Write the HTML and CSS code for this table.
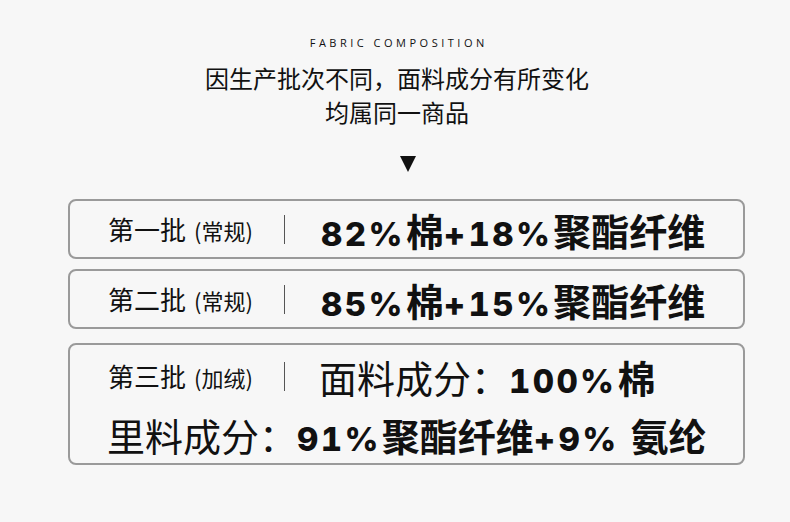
FILE: index.html
```html
<!DOCTYPE html>
<html lang="zh-CN">
<head>
<meta charset="utf-8">
<title>Fabric Composition</title>
<link rel="stylesheet" href="styles.css">
</head>
<body>
<main class="page">
  <header class="head">
    <p class="eyebrow">FABRIC COMPOSITION</p>
    <p class="note">因生产批次不同，面料成分有所变化</p>
    <p class="note">均属同一商品</p>
    <svg class="arrow" width="16" height="16" viewBox="0 0 16 16" aria-hidden="true"><polygon points="0,0 16,0 8,16" fill="#111"/></svg>
  </header>

  <section class="list">
    <div class="card">
      <div class="row">
        <div class="label">第一批<span class="tag">(常规)</span></div>
        <span class="divider"></span>
        <div class="big"><b class="num">82%</b><b class="cjk">棉</b><b class="num plus">+</b><b class="num">18%</b><b class="cjk">聚酯纤维</b></div>
      </div>
    </div>
    <div class="card">
      <div class="row">
        <div class="label">第二批<span class="tag">(常规)</span></div>
        <span class="divider"></span>
        <div class="big"><b class="num">85%</b><b class="cjk">棉</b><b class="num plus">+</b><b class="num">15%</b><b class="cjk">聚酯纤维</b></div>
      </div>
    </div>
    <div class="card card-tall">
      <div class="row">
        <div class="label">第三批<span class="tag">(加绒)</span></div>
        <span class="divider"></span>
        <div class="big"><span class="cjk light">面料成分：</span><b class="num">100%</b><b class="cjk">棉</b></div>
      </div>
      <div class="row row-second">
        <div class="big"><span class="cjk light">里料成分：</span><b class="num">91%</b><b class="cjk">聚酯纤维</b><b class="num plus">+</b><b class="num">9%</b><b class="cjk gap">氨纶</b></div>
      </div>
    </div>
  </section>
</main>
</body>
</html>
```

FILE: styles.css
```css
* { box-sizing: border-box; }
html, body { margin: 0; padding: 0; }
body {
  background: #f7f7f7;
  color: #111;
  font-family: "Noto Sans CJK SC", "Noto Sans", sans-serif;
  width: 790px;
  height: 522px;
  overflow: hidden;
}
.page { padding-top: 34px; }
.head {
  display: flex;
  flex-direction: column;
  align-items: center;
  padding-left: 4px;
}
.head p { margin: 0; }
.eyebrow {
  font-family: "Open Sans", "Noto Sans", sans-serif;
  font-size: 11px;
  line-height: 18px;
  letter-spacing: 3.5px;
  color: #111;
  margin-right: -3.5px !important;
}
.note {
  font-size: 24px;
  line-height: 34px;
  font-weight: 400;
  color: #111;
}
.eyebrow + .note { margin-top: 9px; }
.arrow { margin-top: 27px; display: block; margin-left: 22px; }

.list {
  margin-top: 27px;
  margin-left: 68px;
  width: 677px;
  display: flex;
  flex-direction: column;
  gap: 10px;
}
.card {
  border: 2px solid #9a9a9a;
  border-radius: 8px;
  height: 60px;
  padding-left: 38px;
  display: flex;
  flex-direction: column;
  justify-content: center;
}
.card-tall {
  height: 122px;
  margin-top: 4px;
  justify-content: flex-start;
  padding-top: 3px;
}
.row {
  display: flex;
  align-items: center;
  height: 56px;
}
.row-second { height: 46px; margin-top: 7px; padding-left: 1px; }
.label {
  width: 176px;
  font-size: 26px;
  line-height: 30px;
  color: #111;
  display: flex;
  align-items: baseline;
  white-space: nowrap;
}
.tag {
  font-size: 22px;
  margin-left: 8px;
}
.divider {
  width: 1px;
  height: 29px;
  background: #555;
  margin-right: 36px;
}
.big {
  display: flex;
  align-items: baseline;
  white-space: nowrap;
}
.num {
  font-family: "Inter", "Noto Sans", sans-serif;
  font-weight: 800;
  font-size: 33px;
  letter-spacing: 2.4px;
  font-variant-numeric: tabular-nums;
}
.plus { margin: 0 1px 0 0; }
.cjk {
  font-family: "Noto Sans CJK SC", sans-serif;
  font-weight: 700;
  font-size: 38px;
}
.num + .cjk { margin-left: 1px; }
.light { font-weight: 400; margin-left: -2px; }
.num + .gap { margin-left: 12px; }
```
